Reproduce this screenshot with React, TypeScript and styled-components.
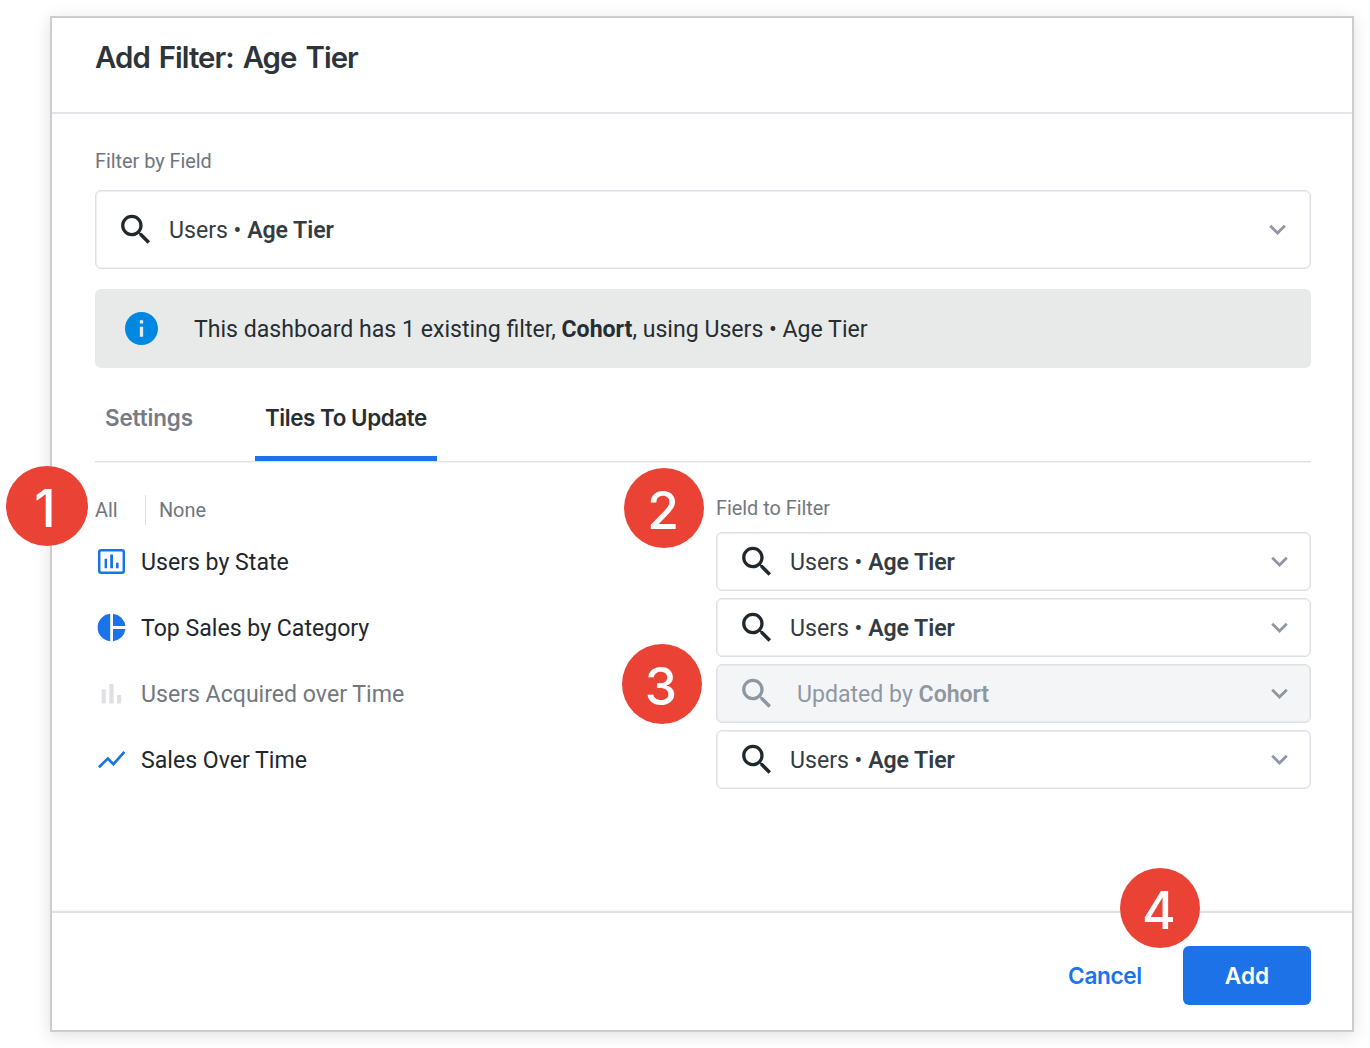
import React from "react";
import styled, { createGlobalStyle } from "styled-components";

const GlobalStyle = createGlobalStyle`
  *, *::before, *::after { box-sizing: border-box; }
  body {
    margin: 0;
    background: #fff;
    font-family: Roboto, "Liberation Sans", sans-serif;
    font-size: 23.1px;
    color: #262d33;
  }
`;

const HEADING_FONT = `Inter, Roboto, sans-serif`;

const Page = styled.div`
  position: relative;
  width: 1370px;
  height: 1048px;
  padding: 16px 16px 16px 50px;
  overflow: hidden;
`;

const Dialog = styled.section`
  display: flex;
  flex-direction: column;
  width: 1304px;
  height: 1016px;
  border: 2px solid #cdcdce;
  background: #fff;
  box-shadow: 0 3px 16px rgba(0, 0, 0, 0.13);
`;

const Header = styled.header`
  height: 96px;
  padding: 20px 43px 0;
  border-bottom: 2px solid #e4e5ea;
`;

const Title = styled.h1`
  margin: 0;
  font: 600 29.4px/40px ${HEADING_FONT};
  letter-spacing: -0.95px;
  word-spacing: 2.5px;
  color: #2d353b;
`;

const Body = styled.main`
  flex: 1;
  padding: 35px 41px 0 43px;
`;

const Label = styled.div<{ $tone?: string }>`
  height: 24px;
  font-size: 19.9px;
  line-height: 26px;
  letter-spacing: -0.03px;
  color: ${(p) => p.$tone ?? "#6f7580"};
`;

const SelectBox = styled.div<{ $tall?: boolean; $disabled?: boolean }>`
  display: flex;
  align-items: center;
  height: ${(p) => (p.$tall ? 79 : 59)}px;
  padding: 0 ${(p) => (p.$tall ? 16 : 14)}px 0 20px;
  border: 1px solid #dcdfe4;
  border-radius: 6px;
  box-shadow: inset 0 0 0 1px rgba(220, 223, 228, 0.5);
  background: ${(p) => (p.$disabled ? "#f4f5f7" : "#fff")};
  color: ${(p) => (p.$disabled ? "#8f98a2" : "#343c42")};
`;

const FieldSelect = styled(SelectBox)`
  margin-top: 17px;
`;

const Value = styled.span<{ $indent?: number }>`
  flex: 1;
  margin-left: ${(p) => p.$indent ?? 13}px;
  padding-top: 2px;
  white-space: pre;
`;

const Strong = styled.b`
  font-weight: 600;
  letter-spacing: -0.05px;
`;

const Notice = styled.div`
  display: flex;
  align-items: center;
  height: 79px;
  margin-top: 20px;
  padding-left: 30px;
  border-radius: 6px;
  background: #e8eae9;
  white-space: pre;
`;

const NoticeText = styled.span`
  margin-left: 36px;
  padding-top: 2px;
`;

const Tabs = styled.nav`
  display: flex;
  gap: 52px;
  height: 94px;
  border-bottom: 1px solid #dcdfe4;
  box-shadow: 0 1px 0 #f3f4f6;
`;

const Tab = styled.div<{ $active?: boolean; $spacing: number }>`
  width: ${(p) => (p.$active ? 182 : 108)}px;
  padding: 34px 0 0 10px;
  border-bottom: ${(p) => (p.$active ? "5px solid #1a73e8" : "none")};
  font: 600 22.4px/32px ${HEADING_FONT};
  letter-spacing: ${(p) => p.$spacing}px;
  color: ${(p) => (p.$active ? "#262d33" : "#757b87")};
  white-space: nowrap;
`;

const Columns = styled.div`
  display: grid;
  grid-template-columns: 621px 595px;
`;

const Column = styled.div<{ $top: number; $gap: number }>`
  display: flex;
  flex-direction: column;
  gap: 7px;
  padding-top: ${(p) => p.$top}px;

  & > :first-child {
    margin-bottom: ${(p) => p.$gap}px;
  }
`;

const Toggle = styled.div`
  display: flex;
  align-items: center;
  height: 30px;
`;

const ToggleRule = styled.i`
  width: 1px;
  height: 30px;
  margin: 0 13px 0 27.4px;
  background: #dcdfe4;
`;

const TileRow = styled.div<{ $disabled?: boolean }>`
  display: flex;
  align-items: center;
  gap: 13px;
  height: 59px;
  color: ${(p) => (p.$disabled ? "#72787d" : "#20282e")};
`;

const TileName = styled.span`
  padding-top: 2px;
`;

const Footer = styled.footer`
  display: flex;
  justify-content: flex-end;
  align-items: flex-start;
  height: 119px;
  padding: 33px 41px 0;
  border-top: 2px solid #e0e1e5;
  box-shadow: 0 -1px 2px rgba(0, 0, 0, 0.04);
`;

const Button = styled.button<{ $primary?: boolean }>`
  width: ${(p) => (p.$primary ? 128 : 156)}px;
  height: 59px;
  padding: 1px 0 0;
  border: 0;
  border-radius: 6px;
  font: 600 22.6px/58px ${HEADING_FONT};
  letter-spacing: ${(p) => (p.$primary ? 0 : -0.35)}px;
  background: ${(p) => (p.$primary ? "#1d72e8" : "transparent")};
  color: ${(p) => (p.$primary ? "#fff" : "#1a73e8")};
`;

const Badge = styled.span<{ $x: number; $y: number; $w?: number }>`
  position: absolute;
  left: ${(p) => p.$x}px;
  top: ${(p) => p.$y}px;
  width: ${(p) => p.$w ?? 80}px;
  height: 80px;
  padding: 1px ${(p) => (p.$w ? 4 : 2)}px 0 0;
  border-radius: 50%;
  background: #ea4335;
  color: #fff;
  font: 500 51.5px/82px ${HEADING_FONT};
  text-align: center;
`;

const Icon = styled.svg<{ $size: number }>`
  flex: none;
  display: block;
  width: ${(p) => p.$size}px;
  height: ${(p) => p.$size}px;
`;

const SearchIcon = ({ color }: { color: string }) => (
  <Icon $size={40} viewBox="-0.1 0.1 24.2 24.2" fill={color}>
    <path d="M15.5 14h-.79l-.28-.27C15.41 12.59 16 11.11 16 9.5 16 5.91 13.09 3 9.5 3S3 5.91 3 9.5 5.91 16 9.5 16c1.61 0 3.09-.59 4.23-1.57l.27.28v.79l5 4.99L20.49 19l-4.99-5zm-6 0C7.01 14 5 11.99 5 9.5S7.01 5 9.5 5 14 7.01 14 9.5 11.99 14 9.5 14z" />
  </Icon>
);

const ChevronIcon = () => (
  <Icon $size={33} viewBox="0 0 24 24" fill="#8f97a2">
    <path d="M16.59 8.59L12 13.17 7.41 8.59 6 10l6 6 6-6z" />
  </Icon>
);

const InfoIcon = () => (
  <Icon $size={33} viewBox="2 2 20 20" fill="#0087e1">
    <path d="M12 2C6.48 2 2 6.48 2 12s4.48 10 10 10 10-4.48 10-10S17.52 2 12 2zm1 15h-2v-6h2v6zm0-8h-2V7h2v2z" />
  </Icon>
);

const BLUE = "#1a73e8";

const tileIcons = {
  chart: (
    <Icon $size={33} viewBox="0 0 33 33" fill={BLUE}>
      <rect x="4.2" y="5.2" width="24.6" height="22.6" rx="2" fill="none" stroke={BLUE} strokeWidth="2.5" />
      <path d="M9.6 13.7h2.5v9.6H9.6zM15.2 9.6h2.8v13.7h-2.8zM21 17.8h2.6v5.5H21z" />
    </Icon>
  ),
  pie: (
    <Icon $size={33} viewBox="0 0 33 33" fill={BLUE}>
      <path d="M15.2 2.8v27.4a13.75 13.75 0 0 1 0-27.4zM18 2.8a13.75 13.75 0 0 1 12.4 12.3H18zM18 17.9h12.4A13.75 13.75 0 0 1 18 30.2z" />
    </Icon>
  ),
  bars: (
    <Icon $size={33} viewBox="0 0 33 33" fill="#dfe0e5">
      <path d="M6.7 12.2h4v14.3h-4zM14.4 7h4.2v19.5h-4.2zM22 18h4.2v8.5H22z" />
    </Icon>
  ),
  line: (
    <Icon $size={33} viewBox="0 0 33 33" fill="none" stroke={BLUE} strokeWidth="2.7">
      <path d="M3.9 24.2L12.8 15.6 18.4 21.2 29.4 8.8" />
    </Icon>
  ),
};

type Tile = { icon: keyof typeof tileIcons; name: string; updatedBy?: string };

const tiles: Tile[] = [
  { icon: "chart", name: "Users by State" },
  { icon: "pie", name: "Top Sales by Category" },
  { icon: "bars", name: "Users Acquired over Time", updatedBy: "Cohort" },
  { icon: "line", name: "Sales Over Time" },
];

export default function App() {
  return (
    <Page>
      <GlobalStyle />
      <Dialog>
        <Header>
          <Title>Add Filter: Age Tier</Title>
        </Header>
        <Body>
          <Label>Filter by Field</Label>
          <FieldSelect $tall>
            <SearchIcon color="#20282e" />
            <Value>Users • <Strong>Age Tier</Strong></Value>
            <ChevronIcon />
          </FieldSelect>
          <Notice>
            <InfoIcon />
            <NoticeText>
              This dashboard has 1 existing filter, <b>Cohort</b>, using Users • Age Tier
            </NoticeText>
          </Notice>
          <Tabs>
            <Tab $spacing={-0.12}>Settings</Tab>
            <Tab $active $spacing={-0.43}>Tiles To Update</Tab>
          </Tabs>
          <Columns>
            <Column $top={33} $gap={0}>
              <Toggle>
                <Label>All</Label>
                <ToggleRule />
                <Label>None</Label>
              </Toggle>
              {tiles.map((t) => (
                <TileRow key={t.name} $disabled={!!t.updatedBy}>
                  {tileIcons[t.icon]}
                  <TileName>{t.name}</TileName>
                </TileRow>
              ))}
            </Column>
            <Column $top={34} $gap={5}>
              <Label $tone="#73787e">Field to Filter</Label>
              {tiles.map((t) => (
                <SelectBox key={t.name} $disabled={!!t.updatedBy}>
                  <SearchIcon color={t.updatedBy ? "#8f98a2" : "#20282e"} />
                  {t.updatedBy ? (
                    <Value $indent={20}>Updated by <Strong>{t.updatedBy}</Strong></Value>
                  ) : (
                    <Value>Users • <Strong>Age Tier</Strong></Value>
                  )}
                  <ChevronIcon />
                </SelectBox>
              ))}
            </Column>
          </Columns>
        </Body>
        <Footer>
          <Button>Cancel</Button>
          <Button $primary>Add</Button>
        </Footer>
      </Dialog>
      <Badge $x={6} $y={466} $w={82}>1</Badge>
      <Badge $x={624} $y={468}>2</Badge>
      <Badge $x={622} $y={644}>3</Badge>
      <Badge $x={1120} $y={868}>4</Badge>
    </Page>
  );
}
